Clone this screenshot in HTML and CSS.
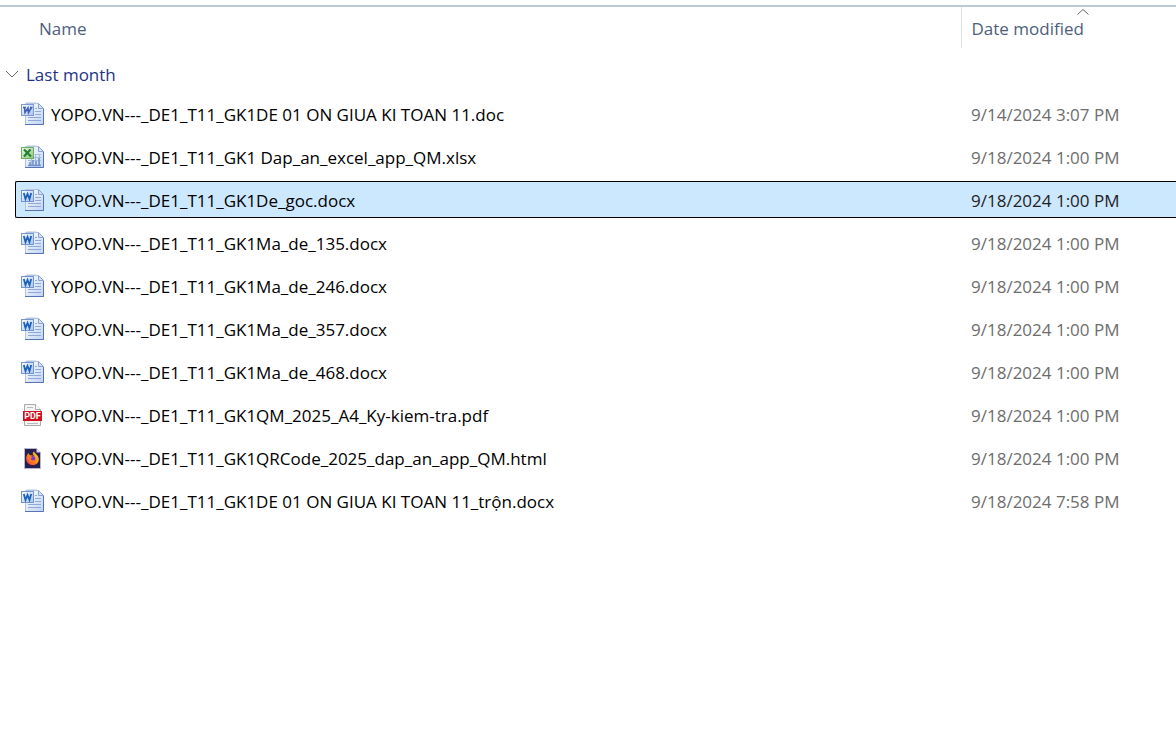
FILE: index.html
```html
<!DOCTYPE html>
<html lang="en">
<head>
<meta charset="utf-8">
<meta name="viewport" content="width=device-width, initial-scale=1">
<title>Files</title>
<link rel="stylesheet" href="styles.css">
</head>
<body>
<svg class="sprite" aria-hidden="true">
  <defs>
    <linearGradient id="sheet" x1="0" y1="0" x2="1" y2="1"><stop offset="0" stop-color="#fff"/><stop offset="1" stop-color="#bfd3f3"/></linearGradient>
    <linearGradient id="tile" x1="0" y1="0" x2="1" y2="1"><stop offset="0" stop-color="#fafcff"/><stop offset="1" stop-color="#a9c4ec"/></linearGradient>
    <linearGradient id="green" x1="0" y1="0" x2="1" y2="1"><stop offset="0" stop-color="#eff8ea"/><stop offset="1" stop-color="#8cc47d"/></linearGradient>
    <linearGradient id="flame" x1="1" y1="0" x2="0" y2="1"><stop offset="0" stop-color="#ffe226"/><stop offset=".5" stop-color="#ff8a1c"/><stop offset="1" stop-color="#f2304c"/></linearGradient>
  </defs>
  <symbol id="page" viewBox="0 0 24 24">
    <path d="M5.500 .5H15.500" fill="none" stroke="#dbe4ee"/>
    <path d="M4.500 1.500H17.500L22.500 6.500V22.500H4.500Z" fill="url(#sheet)" stroke="#b3c5e2"/>
    <path d="M22.500 7V22.500H4" fill="none" stroke="#5674b4"/>
    <path d="M17.500 1.500V6.500H22.500Z" fill="#d3e1f7" stroke="#8ba5d3"/>
  </symbol>
  <symbol id="lines" viewBox="0 0 24 24">
    <path d="M14 6.500H16M14 9.500H20M14 12.500H20M7 15.500H20M7 18.500H20" stroke="#8da9d8"/>
  </symbol>
  <symbol id="word" viewBox="0 0 24 24">
    <use href="#page"/><use href="#lines"/>
    <rect x=".5" y="2.500" width="12" height="11" fill="url(#tile)" stroke="#7396d0"/>
    <path d="M2.800 5L4.500 11L6.500 6L8.500 11L10.200 5" fill="none" stroke="#1c62bc" stroke-width="1.800"/>
  </symbol>
  <symbol id="word-old" viewBox="0 0 24 24">
    <use href="#page"/><use href="#lines"/>
    <rect x=".5" y="2.500" width="12" height="11" fill="url(#tile)" stroke="#8099d6"/>
    <path d="M2 5.500H5M3.500 5.500L4 10.500L7 6L7.500 10.500L10.500 5.500M9 5.500H11.500" fill="none" stroke="#3f5fb4" stroke-width="1.600"/>
  </symbol>
  <symbol id="excel" viewBox="0 0 24 24">
    <use href="#page"/>
    <path d="M14 9.500H20M7 12.500H20M7 15.500H20M10.500 13V20M14.500 9V20M18.500 9V20" stroke="#a6bde1"/>
    <path d="M9 20V17M12 20V15M15 20V16M18 20V13M7 20.500H20" fill="none" stroke="#6d8fc8" stroke-width="1.500"/>
    <rect x=".5" y="2.500" width="12" height="11" fill="url(#green)" stroke="#6bad61"/>
    <path d="M3 4.500L10 11.500M9.500 4.500L3 11.500" stroke="#218232" stroke-width="2.200"/>
  </symbol>
  <symbol id="firefox" viewBox="0 0 24 24">
    <path d="M3.500 2.500H15.500L19.500 6.500V22.500H3.500Z" fill="#25204f" stroke="#b9b7cb"/>
    <path d="M15.500 2.500L19.500 6.500H15.500Z" fill="#ddd9ea"/>
    <path d="M5.200 13C5 10.500 6 8.500 7.500 7L8.500 9L11 9.500L13.500 10L12 8.500C11.500 7 12 6 13 5.500C14 8 18 9.500 17.800 13.500C17.500 21 5.800 21 5.200 13Z" fill="url(#flame)"/>
    <circle cx="11.700" cy="12.500" r="2.600" fill="#7b3ad0"/>
    <path d="M7 11.500C8.500 10.500 10 10.500 11.500 11.500L9.700 12.500C10 14.500 13 15 14.500 13.500C14 18 7.500 18 7 11.500Z" fill="#ff7a1c"/>
  </symbol>
</svg>
<main class="explorer">
  <table class="files">
    <colgroup><col class="col-gutter"><col><col class="col-date"></colgroup>
    <thead>
      <tr>
        <td></td>
        <th scope="col"><button class="sort sort-name" type="button">Name</button></th>
        <th scope="col" class="head-date" aria-sort="ascending">
          <svg class="arrow" viewBox="0 0 12 6" aria-hidden="true"><path d="M.5 5.500L6 .5L11.500 5.500"/></svg>
          <button class="sort" type="button">Date modified</button>
        </th>
      </tr>
    </thead>
    <tbody>
      <tr>
        <th colspan="3" scope="rowgroup" class="group">
          <button class="toggle" type="button" aria-expanded="true">
            <svg class="chevron" viewBox="0 0 14 8" aria-hidden="true"><path d="M1 1L7 7L13 1"/></svg>
            Last month
          </button>
        </th>
      </tr>
      <tr><td></td><td><div class="cell name"><svg class="icon"><use href="#word-old"/></svg>YOPO.VN---_DE1_T11_GK1DE 01 ON GIUA KI TOAN 11.doc</div></td><td><div class="cell date">9/14/2024 3:07 PM</div></td></tr>
      <tr><td></td><td><div class="cell name"><svg class="icon"><use href="#excel"/></svg>YOPO.VN---_DE1_T11_GK1 Dap_an_excel_app_QM.xlsx</div></td><td><div class="cell date">9/18/2024 1:00 PM</div></td></tr>
      <tr class="selected" aria-selected="true"><td></td><td><div class="cell name"><svg class="icon"><use href="#word"/></svg>YOPO.VN---_DE1_T11_GK1De_goc.docx</div></td><td><div class="cell date">9/18/2024 1:00 PM</div></td></tr>
      <tr><td></td><td><div class="cell name"><svg class="icon"><use href="#word"/></svg>YOPO.VN---_DE1_T11_GK1Ma_de_135.docx</div></td><td><div class="cell date">9/18/2024 1:00 PM</div></td></tr>
      <tr><td></td><td><div class="cell name"><svg class="icon"><use href="#word"/></svg>YOPO.VN---_DE1_T11_GK1Ma_de_246.docx</div></td><td><div class="cell date">9/18/2024 1:00 PM</div></td></tr>
      <tr><td></td><td><div class="cell name"><svg class="icon"><use href="#word"/></svg>YOPO.VN---_DE1_T11_GK1Ma_de_357.docx</div></td><td><div class="cell date">9/18/2024 1:00 PM</div></td></tr>
      <tr><td></td><td><div class="cell name"><svg class="icon"><use href="#word"/></svg>YOPO.VN---_DE1_T11_GK1Ma_de_468.docx</div></td><td><div class="cell date">9/18/2024 1:00 PM</div></td></tr>
      <tr><td></td><td><div class="cell name"><svg class="icon" viewBox="0 0 24 24">
        <path d="M3.500 1.500H14.500L19.500 6.500V22.500H3.500Z" fill="#f5f5f5" stroke="#aaa"/>
        <path d="M14.500 1.500V6.500H19.500" fill="#fff" stroke="#aaa"/>
        <path d="M6 4.500H12M6 20.500H17" stroke="#bbb"/>
        <rect x="2" y="8" width="19" height="10" fill="#d0101c"/>
        <text x="11.500" y="16" class="pdf-text">PDF</text>
      </svg>YOPO.VN---_DE1_T11_GK1QM_2025_A4_Ky-kiem-tra.pdf</div></td><td><div class="cell date">9/18/2024 1:00 PM</div></td></tr>
      <tr><td></td><td><div class="cell name"><svg class="icon"><use href="#firefox"/></svg>YOPO.VN---_DE1_T11_GK1QRCode_2025_dap_an_app_QM.html</div></td><td><div class="cell date">9/18/2024 1:00 PM</div></td></tr>
      <tr><td></td><td><div class="cell name"><svg class="icon"><use href="#word"/></svg>YOPO.VN---_DE1_T11_GK1DE 01 ON GIUA KI TOAN 11_trộn.docx</div></td><td><div class="cell date">9/18/2024 7:58 PM</div></td></tr>
    </tbody>
  </table>
</main>
</body>
</html>
```

FILE: styles.css
```css
* { box-sizing: border-box; }

body {
  margin: 0;
  padding-top: 5px;
  background: #fff;
  font-family: "Segoe UI", "Open Sans", "Noto Sans", sans-serif;
  font-size: 17px;
  line-height: 24px;
  color: #000;
}

.sprite { position: absolute; width: 0; height: 0; }

.explorer { border-top: 2px solid #b9cad9; }

.files {
  width: 100%;
  table-layout: fixed;
  border-collapse: collapse;
}

.col-gutter { width: 15px; }
.col-date { width: 215px; }

th, td {
  padding: 0;
  font-weight: 400;
  text-align: left;
  vertical-align: top;
}

button {
  border: 0;
  background: none;
  padding: 0;
  font: inherit;
  color: inherit;
  text-align: left;
}

.sort {
  display: block;
  width: 100%;
  height: 41px;
  padding: 2px 0 0 10px;
  color: #4c607a;
}

.sort-name { padding-left: 24px; }

.head-date {
  position: relative;
  border-left: 1px solid #e2e2e2;
}

.arrow {
  position: absolute;
  top: 2px;
  left: 115px;
  width: 12px;
  height: 6px;
}

.arrow path, .chevron path {
  fill: none;
  stroke: #666;
}

.toggle {
  display: flex;
  align-items: center;
  gap: 7px;
  height: 44px;
  padding: 10px 0 0 5px;
  color: #1e3287;
}

.chevron {
  width: 14px;
  height: 8px;
  margin-bottom: 2px;
}

td { padding: 3px 0; }
thead td { padding: 0; }

.cell {
  display: flex;
  align-items: center;
  height: 37px;
  padding-top: 2px;
  border: solid transparent;
  border-width: 1px 0;
  white-space: nowrap;
}

.name {
  gap: 6px;
  padding-left: 5px;
  border-left-width: 1px;
}

.date { padding-left: 10px; color: #6d6d6d; }

.selected .cell { background: #cce8ff; border-color: #000; }
.selected .name { border-radius: 2px 0 0 2px; }
.selected .date { color: #222; }

.icon {
  flex: none;
  width: 24px;
  height: 24px;
  margin-bottom: 2px;
}

.pdf-text {
  font: 700 9px Roboto, sans-serif;
  fill: #fff;
  text-anchor: middle;
}
```
